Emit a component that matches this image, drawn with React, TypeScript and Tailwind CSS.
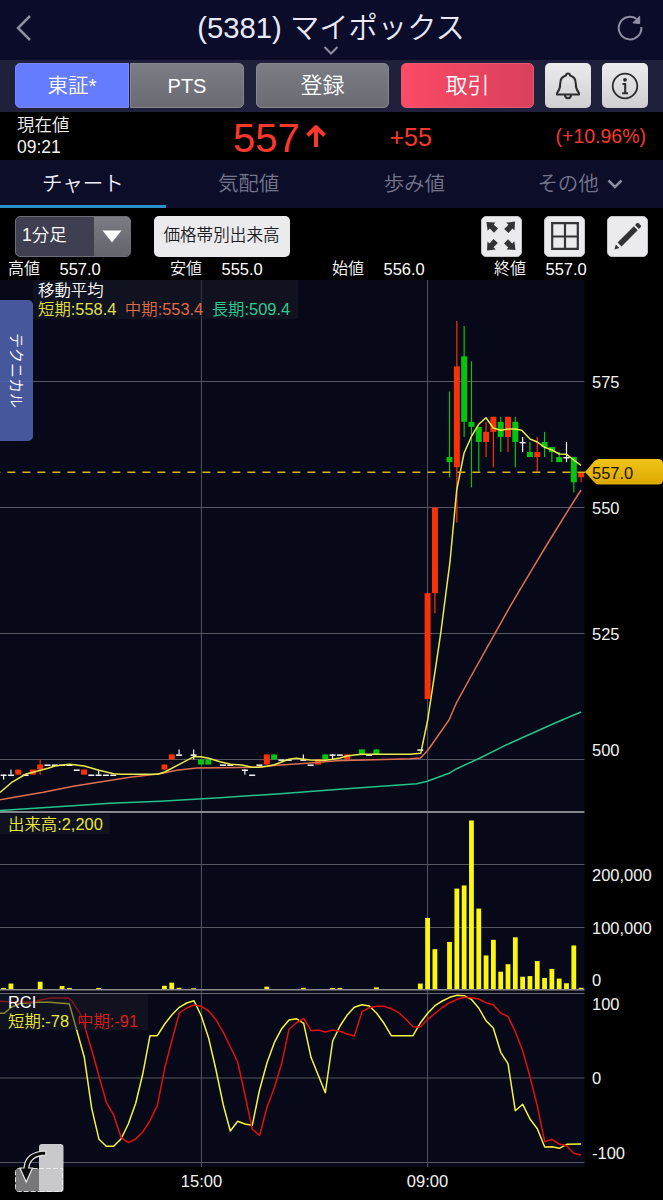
import React from 'react';

type Candle = { i: number; o: number; h: number; l: number; c: number };

// [slot, open, high, low, close], slot 0 is 09:00
const RAW: number[][] = [
  [-58, 497, 497, 496, 497], [-57, 497, 498, 497, 497], [-56, 497, 498, 497, 498],
  [-55, 497, 497, 497, 497], [-54, 497, 498, 497, 498], [-53, 498, 500, 497, 499],
  [-52, 499, 499, 499, 499], [-51, 499, 499, 499, 499], [-50, 499, 499, 499, 499],
  [-49, 499, 499, 499, 499], [-48, 498, 498, 498, 498], [-47, 497, 498, 497, 498],
  [-46, 497, 497, 497, 497], [-45, 497, 498, 497, 497], [-44, 497, 497, 497, 497],
  [-43, 497, 497, 497, 497], [-36, 498, 499, 498, 499], [-35, 500, 501, 500, 501],
  [-34, 501, 502, 501, 501], [-32, 501, 502, 500, 501], [-31, 500, 500, 499, 499],
  [-30, 500, 500, 499, 499], [-28, 499, 499, 499, 499], [-27, 499, 499, 499, 499],
  [-25, 498, 498, 497, 498], [-24, 497, 497, 497, 497], [-23, 499, 499, 499, 499],
  [-22, 499, 501, 499, 501], [-21, 501, 501, 500, 500], [-20, 500, 500, 500, 500],
  [-19, 500, 500, 500, 500], [-17, 500, 501, 500, 500], [-16, 499, 499, 499, 499],
  [-15, 499, 500, 499, 500], [-14, 501, 501, 500, 500], [-13, 501, 501, 500, 501],
  [-12, 501, 501, 501, 501], [-11, 500, 501, 500, 501], [-9, 502, 502, 501, 501],
  [-8, 501, 501, 501, 501], [-7, 502, 502, 501, 501], [-1, 502, 502, 502, 502],
  [0, 512, 533, 512, 533], [1, 533, 550, 529, 550], [3, 560, 573, 556, 559],
  [4, 558, 587, 547, 578], [5, 580, 586, 564, 567], [6, 567, 579, 554, 566],
  [7, 566, 566, 557, 563], [8, 563, 567, 560, 565], [9, 565, 568, 558, 568],
  [10, 567, 568, 561, 564], [11, 564, 568, 561, 568], [12, 567, 568, 558, 563],
  [13, 563, 564, 561, 563], [14, 561, 563, 560, 560], [15, 560, 564, 557, 561],
  [16, 563, 565, 560, 562], [17, 562, 562, 559, 561], [18, 560, 561, 559, 559],
  [19, 560, 563, 559, 560], [20, 560, 560, 553, 555], [21, 556, 557, 555, 557],
];
const CANDLES: Candle[] = RAW.map(([i, o, h, l, c]) => ({ i, o, h, l, c }));

// [slot, thousand shares]
const VOLUMES: number[][] = [
  [-58, 2], [-57, 9], [-53, 12], [-50, 5], [-49, 2], [-45, 2], [-36, 5.5], [-35, 10.5], [-34, 2.2],
  [-32, 1.5], [-22, 4], [-17, 2.2], [-13, 2], [-12, 2], [-7, 3], [-1, 9], [0, 114], [1, 64],
  [3, 75.6], [4, 161], [5, 166], [6, 270], [7, 129], [8, 54], [9, 79], [10, 28], [11, 40],
  [12, 83], [13, 20], [14, 21], [15, 45], [16, 18], [17, 32.5], [18, 17], [19, 9.5], [20, 70], [21, 2.2],
];

const MA_SHORT =
  '0,792.5 11.3,782.7 26,774 33,772.3 48,768.3 55,766 69.7,764.3 84.3,766 99,770.3 113.7,773.7 121,774.3 157.5,774.3 164.7,772 179.3,764.3 194,756.7 201,756.7 208.7,758.3 220,761.7 230.7,764.3 241.7,765 252.3,767.3 259.3,767.3 267,766.3 274.3,764.7 281.7,762 289,759.3 296.3,758.3 310,760 325.3,760.3 332.7,759.3 340,758 347,756 354.3,755 362,754.3 410,754.3 420.7,753.3 427.7,720 435,671.7 440.7,633.3 450,561.7 456.7,490 464,453.3 471.3,436.7 478.7,424.3 486,417.7 493.3,428 500.7,430.3 508,429 515.3,429 521.7,430.3 530,439 537.3,442 544.7,447.3 552,450 559.3,454 566.7,454.3 573.7,460 581,465.3';
const MA_MID =
  '0,799.7 20,796.3 43.3,792.3 73.3,786.3 100,782 130,777.3 160,773.7 176.7,770.3 196.7,768 220,767.7 256.7,767.3 276.7,765.3 310,763 336.7,760.7 393.3,759.3 410,758.7 420.3,758 427.7,750.5 449,720 456.7,702.3 471.7,675 495,633.3 510,606.7 526.7,578.3 546.7,545 570,507.3 581,490';
const MA_LONG =
  '0,810.5 73,805.7 110,803.3 160,801.3 220,797.7 276.7,794 343.3,789 416.7,783.7 427.3,781.3 449,773.3 456.7,768.7 480,758 506.7,744.7 533.3,732.7 556.7,722.3 581,712';
const RCI_SHORT =
  '0,1013.3 4.3,1013.3 11.3,1007.3 20,1003.5 36.7,1002.3 50,1002.3 58.3,1003 69.3,1003.7 76.7,1030 84.3,1057.3 91.7,1108.3 99,1139.3 106.3,1146.3 113.7,1146.3 121,1139 128.3,1124 135.7,1103.3 142.7,1074.3 150,1035.7 157.3,1035.7 164.7,1024 172,1014.7 179.3,1007.3 186.7,1003 194,1000.7 201.3,1016 208.7,1038.3 216,1070 223.3,1105 230.3,1131 237.7,1121.3 245,1124 252.3,1125.3 259.3,1091 267,1062.7 274.3,1042.7 281.7,1028.7 289,1020 296.3,1018.7 303.7,1023.3 311,1057.3 325.3,1092.7 332.7,1041 340,1026 347,1015.3 354.3,1007.3 362,1004.7 369.3,1006 376.7,1013.3 384,1023.3 391.3,1035.7 413,1035.7 420.3,1023 427.7,1013.3 435,1005.7 442.3,1001 449.7,997.3 457,995.3 464.3,995.7 471.3,999.3 478.7,1008 486,1020.7 493.3,1028 500.7,1052.3 508,1063.7 515.3,1110.7 522.7,1104.3 530,1119 537.3,1128.7 544.7,1147 552,1146.7 559.3,1148.3 566.7,1144.3 581,1144';
const RCI_MID =
  '0,1001.3 13,1002 33,1002 40.7,1000 50,998 68.3,998 71.7,1000.7 80,1013.3 84.3,1025 91.7,1050 99,1076 106.3,1102.3 113.7,1115 121,1137.3 128.3,1142.7 135.7,1139 142.7,1132 150,1120.7 157.3,1105.7 164.7,1068.3 172,1040 179.3,1013 186.7,1008 194,1005 201.3,1006.3 208.7,1011 216,1019.7 223.3,1032.3 237.7,1062 245,1095 252.3,1129.3 259.7,1135.3 267,1107.3 274.3,1087.7 281.7,1063.3 289,1029.3 296.3,1023 303.7,1018.3 311,1030.7 318.3,1030 325.3,1032 332.7,1030 340,1031.3 347,1034 354.3,1036 362,1011.7 369.3,1007.7 376.7,1006.3 384,1006.3 391.3,1008.7 398.7,1012.7 406,1019.3 413,1026.7 420.3,1027 427.7,1019.3 442.3,1007.5 449.7,1002.7 457,999.3 464.3,997.3 471.7,997.7 478.7,999 486,1002.7 493.3,1004.7 500.7,1013 508,1016.7 515.3,1031.7 522.7,1050.7 530,1076.7 537.3,1106 544.7,1141.7 552,1139.3 559.3,1144 566.7,1145.7 573.7,1153.3 581,1155';

const AXIS_LABELS: [string, number][] = [
  ['575', 388], ['550', 514], ['525', 640], ['500', 756],
  ['200,000', 880.5], ['100,000', 933.5], ['0', 986],
  ['100', 1009.5], ['0', 1084], ['-100', 1159],
];

const slotX = (i: number) => 427.6 + i * 7.31;
const priceY = (p: number) => 759.5 - (p - 500) * 5.04;

const CandleMark: React.FC<{ candle: Candle }> = ({ candle }) => {
  const { i, o, h, l, c } = candle;
  const x = slotX(i);
  const color = o === c ? '#f4f4f4' : c > o ? '#f83208' : '#05c40e';
  const top = priceY(Math.max(o, c));
  const bottom = priceY(Math.min(o, c));
  return (
    <g>
      {h !== l && <rect x={x - 0.6} y={priceY(h)} width={1.2} height={priceY(l) - priceY(h)} fill={color} />}
      {o === c ? (
        <rect x={x - 3} y={top - 0.1} width={6} height={1.5} fill={color} />
      ) : (
        <rect x={x - 3} y={top} width={6} height={bottom - top} fill={color} />
      )}
    </g>
  );
};

const Chart: React.FC = () => (
  <svg viewBox="0 280 663 920" width="663" height="920" className="block">
    <defs>
      <linearGradient id="tag" x1="0" y1="0" x2="0" y2="1">
        <stop offset="0" stopColor="#f0c419" />
        <stop offset="1" stopColor="#dda800" />
      </linearGradient>
    </defs>
    <rect x="0" y="280" width="584.5" height="887" fill="#070818" />

    <g stroke="#55565f" strokeWidth="1">
      {[381.5, 507.5, 633.5, 759.5, 864.5, 927.5, 1078, 1162.5].map((y) => (
        <line key={y} x1="0" x2="584.5" y1={y} y2={y} />
      ))}
      <line x1="201.4" x2="201.4" y1="280" y2="1167" />
      <line x1="427.6" x2="427.6" y1="280" y2="1167" />
    </g>
    <line x1="0" x2="584.5" y1="993.5" y2="993.5" stroke="#6a6b74" />
    <line x1="0" x2="584.5" y1="812" y2="812" stroke="#86878e" strokeWidth="2" />

    {CANDLES.map((candle) => <CandleMark key={candle.i} candle={candle} />)}

    <g fill="none" strokeWidth="1.5" strokeLinejoin="round">
      <polyline points={MA_LONG} stroke="#23c48c" />
      <polyline points={MA_MID} stroke="#de7050" />
      <polyline points={MA_SHORT} stroke="#eaea4c" />
    </g>
    <line x1="0" x2="586" y1="472.3" y2="472.3" stroke="#d6ae1e" strokeWidth="1.5" strokeDasharray="8 7" strokeDashoffset="7.6" />

    {VOLUMES.map(([i, v]) => (
      <rect key={i} x={slotX(i) - 2.4} y={989.2 - v * 0.625} width={4.8} height={v * 0.625} fill="#fbf80e" />
    ))}
    <line x1="0" x2="584.5" y1="989.8" y2="989.8" stroke="#8b8b86" strokeWidth="1.6" />

    <g fill="none" strokeWidth="1.5" strokeLinejoin="round">
      <polyline points={RCI_SHORT} stroke="#f4f43c" />
      <polyline points={RCI_MID} stroke="#e01010" />
    </g>

    <path d="M585 472 L594 461.5 Q596 459 599 459 H658 Q663 459 663 464 V480 Q663 484.500 658 484.500 H599 Q596 484.500 594 482 Z" fill="url(#tag)" />
    <text x="592" y="478.500" fontSize="16.500" fill="#1c1404">557.0</text>
    <g fontSize="16.500" fill="#f2f2f2">
      {AXIS_LABELS.map(([label, y]) => (
        <text key={y} x="592" y={y}>{label}</text>
      ))}
      <text x="201.500" y="1187" textAnchor="middle">15:00</text>
      <text x="427.500" y="1187" textAnchor="middle">09:00</text>
    </g>
  </svg>
);

const BellIcon = () => (
  <svg width="26" height="28" viewBox="0 0 26 28" fill="none" stroke="#2c2c2e" strokeWidth="2" strokeLinejoin="round">
    <path d="M11 3.600 C11 0.900 15 0.900 15 3.600 C19.500 4.600 20.800 8.500 20.800 12 C20.800 17.500 22 18.500 24 21 V22.500 H2 V21 C4 18.500 5.200 17.500 5.200 12 C5.200 8.500 6.500 4.600 11 3.600 Z" />
    <path d="M10 23 C10 27.200 16 27.200 16 23" />
  </svg>
);

const InfoIcon = () => (
  <svg width="28" height="28" viewBox="0 0 28 28" fill="none" stroke="#2c2c2e" strokeWidth="1.800">
    <circle cx="14" cy="14" r="12.300" />
    <circle cx="14" cy="7.800" r="1.900" fill="#2c2c2e" stroke="none" />
    <path d="M11.500 12 H14.200 V21 M11.200 21.300 H17" strokeWidth="2" />
  </svg>
);

const ExpandIcon = () => (
  <svg width="32" height="32" viewBox="0 0 32 32" fill="#333335" className="shrink-0">
    {[0, 90, 180, 270].map((deg) => (
      <path key={deg} transform={`rotate(${deg} 16 16)`} d="M1.500 2 L10.500 2.500 L8.600 4.500 L13 8.500 L9 12.800 L4.800 8.600 L2.600 10.800 Z" />
    ))}
  </svg>
);

const GridIcon = () => (
  <svg width="28" height="28" viewBox="0 0 28 28" fill="none" stroke="#333335" strokeWidth="2.200">
    <path d="M1.200 1.200 H26.800 V26.800 H1.200 Z M14 1 V27 M1 14.500 H27" />
  </svg>
);

const PencilIcon = () => (
  <svg width="30" height="30" viewBox="0 0 30 30" fill="#333335">
    <path d="M1.500 28.500 L2.800 23.600 L6.300 27.100 Z" />
    <path d="M4.600 21.500 L20.800 5.300 L24.700 9.200 L8.500 25.400 Z" />
    <path d="M22 4.100 L23.900 2.200 Q24.800 1.500 25.600 2.200 L27.800 4.400 Q28.500 5.200 27.800 6.100 L25.900 8 Z" />
  </svg>
);

const RotateIcon = () => (
  <svg width="50" height="50" viewBox="0 0 50 50">
    <rect x="1.500" y="25.500" width="47" height="23" rx="3" fill="#77777a" stroke="#dcdcdc" strokeDasharray="5 2" />
    <rect x="25" y="1" width="24.500" height="48" rx="3" fill="#c9c9cb" />
    <path d="M25 25.500 H48.500 V45.500 Q48.500 48.500 45.500 48.500 H25" fill="none" stroke="#ededed" strokeDasharray="5 2" />
    <path d="M31.800 8 C18 8.300 10.800 14.500 10 25 H6 L12.200 39 L18.500 25 H14.700 C15.800 17 21 12.500 31.800 12.200 Z" fill="#0b0b0b" stroke="#e8e8e8" strokeWidth="1.200" />
  </svg>
);

const STATS = [
  { label: '高値', value: '557.0', box: 'w-[162px]' },
  { label: '安値', value: '555.0', box: 'w-[162px]' },
  { label: '始値', value: '556.0', box: 'w-[162px]' },
  { label: '終値', value: '557.0', box: 'w-[120px]' },
];

const SQUARE = 'flex items-center justify-center rounded-[5px] border border-[#c4c4c8] bg-[#ebebee]';

const App: React.FC = () => {
  return (
    <div className="flex h-[1200px] w-[663px] flex-col overflow-hidden bg-black font-['Liberation_Sans','Noto_Sans_CJK_JP',sans-serif] font-[350] leading-none whitespace-nowrap text-white">
      <header className="relative flex h-[60px] shrink-0 items-center justify-between bg-[#0b0c29] px-4">
        <svg width="16" height="26" viewBox="0 0 16 26" fill="none" stroke="#8d8ea3" strokeWidth="2.500" className="mt-[-5px]">
          <path d="M14 1 L2 13 L14 25" />
        </svg>
        <h1 className="mt-[-4px] ml-[13px] text-[29.300px] text-[#e9e9fa]">(5381) マイポックス</h1>
        <svg width="26" height="26" viewBox="0 0 26 26" className="mt-[-5px] mr-[4px]">
          <path d="M24.300 12 A11.300 11.300 0 1 1 19.500 3.800" fill="none" stroke="#8d8ea3" strokeWidth="2" />
          <path d="M22.700 1.200 V8.600 L15.800 7.800 Z" fill="#8d8ea3" stroke="#8d8ea3" strokeLinejoin="round" />
        </svg>
        <svg width="16" height="10" viewBox="0 0 16 10" fill="none" stroke="#8d8ea3" strokeWidth="2" className="absolute top-[46px] left-[323px]">
          <path d="M1.500 1 L8 7.500 L14.500 1" />
        </svg>
      </header>

      <div className="flex h-[52px] shrink-0 items-start bg-[#1f203c] pt-[3.400px] pl-[15px] text-[20.500px]">
        <button className="flex h-[45px] w-[114px] items-center justify-center rounded-l-[5px] border border-[#7d88f8] bg-[#667cff]">東証*</button>
        <button className="ml-px flex h-[45px] w-[114px] items-center justify-center rounded-r-[5px] border border-[#85868e] bg-linear-to-b from-[#7b7c84] to-[#6a6b73] text-[20px]">PTS</button>
        <button className="ml-[12px] flex h-[45px] w-[133px] items-center justify-center rounded-[5px] border border-[#85868e] bg-linear-to-b from-[#7b7c84] to-[#6a6b73] text-[22px]">登録</button>
        <button className="ml-[12px] flex h-[45px] w-[133px] items-center justify-center rounded-[5px] border border-[#e85a72] bg-linear-to-r from-[#fb4a66] to-[#d9405c] text-[22px]">取引</button>
        <button className="ml-[11px] flex h-[45px] w-[46px] items-center justify-center rounded-[5px] bg-linear-to-b from-[#ececee] to-[#cfcfd2]"><BellIcon /></button>
        <button className="ml-[11px] flex h-[45px] w-[46px] items-center justify-center rounded-[5px] bg-linear-to-b from-[#ececee] to-[#cfcfd2]"><InfoIcon /></button>
      </div>

      <div className="flex h-[48px] shrink-0 items-center text-[#f8382c]">
        <div className="flex w-[233px] flex-col gap-[5px] pt-px pl-[17px] text-[17.500px] text-[#f2f2f2]">
          <span>現在値</span>
          <span>09:21</span>
        </div>
        <div className="mt-[3px] flex w-[156.500px] items-center text-[40px]">
          557
          <svg width="20" height="24" viewBox="0 0 20 24" fill="none" stroke="#f8382c" strokeWidth="4" className="mt-[-3px] ml-[6px]">
            <path d="M10 23 V4 M1.500 11.500 L10 3 L18.500 11.500" strokeLinejoin="round" />
          </svg>
        </div>
        <span className="mt-[2px] w-[166px] text-[25px]">+55</span>
        <span className="mt-[2px] text-[19.500px]">(+10.96%)</span>
      </div>

      <nav className="grid h-[48px] shrink-0 grid-cols-4 bg-[#0c0d29] text-[20.500px] text-[#74758a]">
        <div className="flex items-center justify-center border-b-3 border-[#2a8fcb] pt-[4px] text-[#f0f0fa]">チャート</div>
        <div className="flex items-center justify-center pt-px">気配値</div>
        <div className="flex items-center justify-center pt-px">歩み値</div>
        <div className="flex items-center justify-center gap-[8px] pt-px">
          その他
          <svg width="16" height="11" viewBox="0 0 16 11" fill="none" stroke="#8d8ea3" strokeWidth="2.500">
            <path d="M1.500 1.500 L8 8 L14.500 1.500" />
          </svg>
        </div>
      </nav>

      <div className="flex h-[50px] shrink-0 items-start pt-[7.500px] pl-[15px]">
        <div className="flex h-[41px] w-[116px] items-stretch overflow-hidden rounded-[5px] border border-[#6c6d78] bg-[#3e3f50] text-[17.500px]">
          <span className="flex w-[78px] items-center pl-[6px]">1分足</span>
          <span className="flex flex-1 items-center justify-center bg-linear-to-b from-[#7b7c84] to-[#62636b]">
            <svg width="20" height="13" viewBox="0 0 20 13"><path d="M0.500 0.500 H19.500 L10 12.500 Z" fill="#fff" /></svg>
          </span>
        </div>
        <button className="ml-[22.500px] flex h-[41px] w-[136px] items-center justify-center rounded-[5px] bg-[#ebebee] text-[16.600px] text-[#1c1c1e]">価格帯別出来高</button>
        <button className={`${SQUARE} ml-[191px] h-[41px] w-[41px]`}><ExpandIcon /></button>
        <button className={`${SQUARE} ml-[22.500px] h-[41px] w-[41px]`}><GridIcon /></button>
        <button className={`${SQUARE} ml-[22px] h-[41px] w-[41px]`}><PencilIcon /></button>
      </div>

      <div className="flex h-[22px] shrink-0 items-center pl-[8px] text-[16.500px]">
        {STATS.map((s) => (
          <div key={s.label} className={`flex items-center ${s.box}`}>
            <span className="w-[51.500px] text-[16px]">{s.label}</span>
            <span>{s.value}</span>
          </div>
        ))}
      </div>

      <main className="relative h-[920px] shrink-0 text-[16.400px]">
        <Chart />
        <div className="absolute top-0 left-[33px] flex h-[39px] w-[265px] flex-col gap-[3px] bg-[#1b1b26]/50 pt-[2px] pl-[5px]">
          <span>移動平均</span>
          <span className="flex gap-[8.500px]">
            <span className="text-[#e0e04a]">短期:558.4</span>
            <span className="text-[#de6a48]">中期:553.4</span>
            <span className="text-[#2ccc92]">長期:509.4</span>
          </span>
        </div>
        <div className="absolute top-[20px] left-0 flex h-[141px] w-[33px] items-center justify-center rounded-r-[5px] bg-[#4f60ab]/90">
          <span className="rotate-90 text-[15px]">テクニカル</span>
        </div>
        <div className="absolute top-[534px] left-0 h-[20px] w-[110px] bg-[#1b1b26]/50 pt-[2px] pl-[8px] text-[#e8e83c]">出来高:2,200</div>
        <div className="absolute top-[714px] left-0 flex h-[36px] w-[148px] flex-col gap-[2.500px] bg-[#1b1b26]/50 pl-[8px]">
          <span>RCI</span>
          <span className="flex gap-[8px]">
            <span className="text-[#e8e83c]">短期:-78</span>
            <span className="text-[#dc1c1c]">中期:-91</span>
          </span>
        </div>
        <div className="absolute top-[863px] left-[14px]"><RotateIcon /></div>
      </main>
    </div>
  );
};

export default App;
